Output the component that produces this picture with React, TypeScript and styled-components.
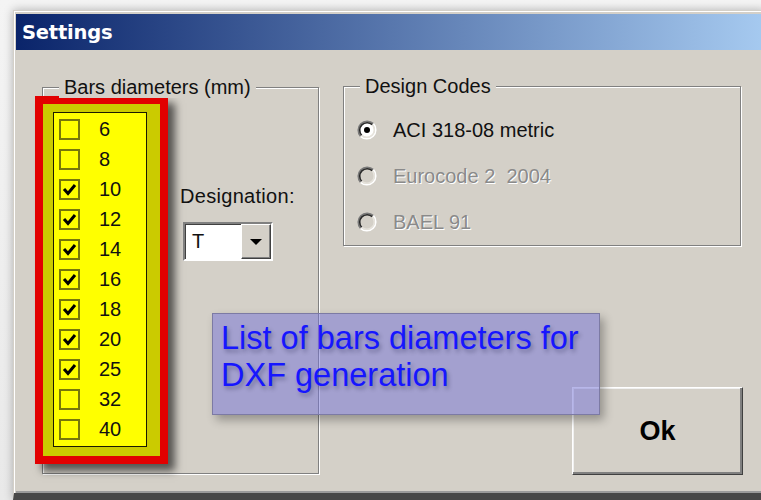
import React from 'react';
import styled, { createGlobalStyle } from 'styled-components';

const GlobalStyle = createGlobalStyle`
	html, body {
		margin: 0;
		padding: 0;
		background: #f0f0f0;
	}
	* {
		box-sizing: border-box;
	}
`;

const Screen = styled.div`
	width: 761px;
	height: 500px;
	overflow: hidden;
	padding: 10px 0 0 13px;
	background: linear-gradient(180deg, #f4f4f4 0%, #e9e9e9 100%);
	font-family: "Liberation Sans", Arial, sans-serif;
`;

const Window = styled.div`
	width: 752px;
	height: 490px;
	display: flex;
	flex-direction: column;
	padding: 3px 0 0 2px;
	background: #d4d0c8;
	border-top: 1px solid #d4d0c8;
	border-left: 1px solid #d4d0c8;
	border-bottom: 7px solid #474747;
	box-shadow: inset 1px 1px 0 #ffffff, 0 0 9px rgba(0, 0, 0, 0.28);
`;

const TitleBar = styled.div`
	height: 36px;
	flex: none;
	display: flex;
	align-items: center;
	padding-left: 6px;
	background: linear-gradient(90deg, #0a246a 0%, #a6caf0 100%);
	color: #ffffff;
	font-family: "DejaVu Sans", Verdana, sans-serif;
	font-weight: bold;
	font-size: 19.5px;
	letter-spacing: -0.2px;
`;

const Body = styled.div`
	position: relative;
	flex: 1;
	display: flex;
	align-items: flex-start;
	padding: 37px 0 0 26px;
	box-shadow: inset 0 -2px 0 #9a9a9a;
`;

const GroupBox = styled.div<{ $width: number; $height: number }>`
	position: relative;
	flex: none;
	width: ${p => p.$width}px;
	height: ${p => p.$height}px;
	border: 1px solid #808080;
	box-shadow: inset 1px 1px 0 #ffffff, 1px 1px 0 #ffffff;
`;

const Legend = styled.span`
	position: absolute;
	top: -12px;
	left: 16px;
	padding: 0 5px;
	background: #d4d0c8;
	font-size: 20px;
	line-height: 22px;
	color: #111;
	white-space: nowrap;
`;

const BarsContent = styled.div`
	display: flex;
	align-items: flex-start;
	padding-top: 8px;
	margin-left: -8px;
`;

const Highlight = styled.div`
	flex: none;
	border: 8px solid #e20000;
	background: #cbcb00;
	padding: 8px 13px 9px 10px;
	box-shadow: 7px 7px 8px rgba(0, 0, 0, 0.6);
`;

const CheckList = styled.div`
	width: 94px;
	height: 335px;
	border: 1px solid #1a1a00;
	background: #ffff00;
	padding: 1px 0 0 5px;
`;

const CheckRow = styled.div`
	height: 30px;
	display: flex;
	align-items: center;
	gap: 19px;
	font-size: 20px;
	color: #111;
`;

const CheckBox = styled.span`
	width: 21px;
	height: 21px;
	flex: none;
	border: 2px solid #77770a;
	display: flex;
	align-items: center;
	justify-content: center;
`;

const DesignationColumn = styled.div`
	display: flex;
	flex-direction: column;
	margin: 89px 0 0 12px;
	font-size: 20px;
	color: #111;
`;

const FieldLabel = styled.span`
	line-height: 22px;
	white-space: nowrap;
	letter-spacing: 0.3px;
`;

const Combo = styled.div`
	width: 90px;
	height: 39px;
	margin: 15px 0 0 3px;
	display: flex;
	background: #ffffff;
	border: 2px solid;
	border-color: #808080 #ffffff #ffffff #808080;
	box-shadow: inset 1px 1px 0 #404040;
`;

const ComboText = styled.span`
	flex: 1;
	padding: 6px 0 0 7px;
	font-size: 20px;
	line-height: 22px;
`;

const ComboButton = styled.span`
	width: 30px;
	flex: none;
	display: flex;
	align-items: center;
	justify-content: center;
	background: #d4d0c8;
	border: 1px solid;
	border-color: #ffffff #404040 #404040 #ffffff;
	box-shadow: inset -1px -1px 0 #808080;
`;

const Arrow = styled.span`
	width: 0;
	height: 0;
	border-left: 6px solid transparent;
	border-right: 6px solid transparent;
	border-top: 6px solid #000;
`;

const RightColumn = styled.div`
	display: flex;
	flex-direction: column;
	margin: -1px 0 0 24px;
`;

const RadioList = styled.div`
	display: flex;
	flex-direction: column;
	padding: 20px 0 0 13px;
`;

const RadioRow = styled.div<{ $disabled?: boolean }>`
	height: 46px;
	display: flex;
	align-items: center;
	gap: 16px;
	font-size: 20px;
	color: ${p => (p.$disabled ? '#8a8a8a' : '#111')};
	text-shadow: ${p => (p.$disabled ? '1px 1px 0 #ffffff' : 'none')};
	white-space: pre;
`;

const OkButton = styled.button`
	align-self: flex-end;
	width: 171px;
	height: 88px;
	margin: 141px -2px 0 0;
	background: #d4d0c8;
	border: 1px solid;
	border-color: #ffffff #404040 #404040 #ffffff;
	box-shadow: inset -2px -2px 0 #808080, inset 1px 1px 0 #f0f0f0;
	font-family: "Liberation Sans", Arial, sans-serif;
	font-weight: bold;
	font-size: 27px;
	color: #000;
	padding: 0;
`;

const Note = styled.div`
	position: absolute;
	left: 196px;
	top: 263px;
	width: 388px;
	height: 102px;
	padding: 6px 0 0 8px;
	background: rgba(118, 116, 212, 0.52);
	border: 1px solid #7c7aa4;
	box-shadow: 4px 5px 9px rgba(0, 0, 0, 0.3);
	color: #1616ff;
	font-size: 32.5px;
	line-height: 37px;
	text-shadow: 2px 3px 4px rgba(0, 0, 40, 0.3);
	z-index: 2;
`;

const diameters: [number, boolean][] = [
	[6, false], [8, false], [10, true], [12, true], [14, true], [16, true],
	[18, true], [20, true], [25, true], [32, false], [40, false],
];

const codes = [
	{ name: 'ACI 318-08 metric', enabled: true, checked: true },
	{ name: 'Eurocode 2  2004', enabled: false, checked: false },
	{ name: 'BAEL 91', enabled: false, checked: false },
];

// classic two-tone sunken radio: dark top-left, light bottom-right
function Radio({ checked, enabled }: { checked: boolean; enabled: boolean }) {
	return (
		<svg width="20" height="20" viewBox="0 0 20 20">
			<circle cx="10" cy="10" r="7.5" fill={enabled ? '#ffffff' : '#d4d0c8'} />
			<path d="M3.64 16.36 A9 9 0 0 1 16.36 3.64" fill="none" stroke="#7a7a7a" strokeWidth="1.6" />
			<path d="M16.36 3.64 A9 9 0 0 1 3.64 16.36" fill="none" stroke="#ffffff" strokeWidth="1.6" />
			<path d="M4.7 15.3 A7.5 7.5 0 0 1 15.3 4.7" fill="none" stroke="#2a2a2a" strokeWidth="1.6" />
			<path d="M15.3 4.7 A7.5 7.5 0 0 1 4.7 15.3" fill="none" stroke="#e6e3dc" strokeWidth="1.6" />
			{checked && <circle cx="10" cy="10" r="3" fill="#000" />}
		</svg>
	);
}

function Tick() {
	return (
		<svg width="15" height="15" viewBox="0 0 15 15">
			<path d="M2 7 L6 11.5 L13 3" fill="none" stroke="#000" strokeWidth="3" />
		</svg>
	);
}

export default function App() {
	return (
		<Screen>
			<GlobalStyle />
			<Window>
				<TitleBar>Settings</TitleBar>
				<Body>
					<GroupBox $width={277} $height={387}>
						<Legend>Bars diameters (mm)</Legend>
						<BarsContent>
							<Highlight>
								<CheckList>
									{diameters.map(([d, on]) => (
										<CheckRow key={d}>
											<CheckBox>{on && <Tick />}</CheckBox>
											<span>{d}</span>
										</CheckRow>
									))}
								</CheckList>
							</Highlight>
							<DesignationColumn>
								<FieldLabel>Designation:</FieldLabel>
								<Combo>
									<ComboText>T</ComboText>
									<ComboButton><Arrow /></ComboButton>
								</Combo>
							</DesignationColumn>
						</BarsContent>
					</GroupBox>
					<RightColumn>
						<GroupBox $width={398} $height={160}>
							<Legend>Design Codes</Legend>
							<RadioList>
								{codes.map(c => (
									<RadioRow key={c.name} $disabled={!c.enabled}>
										<Radio checked={c.checked} enabled={c.enabled} />
										<span>{c.name}</span>
									</RadioRow>
								))}
							</RadioList>
						</GroupBox>
						<OkButton>Ok</OkButton>
					</RightColumn>
					<Note>
						List of bars diameters for
						<br />
						DXF generation
					</Note>
				</Body>
			</Window>
		</Screen>
	);
}
